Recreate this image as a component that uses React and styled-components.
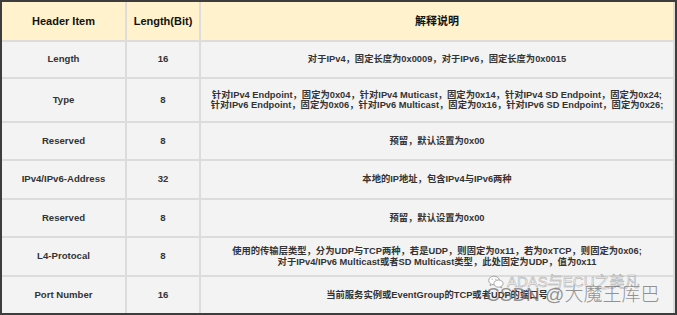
import styled, { createGlobalStyle } from "styled-components"

const GlobalStyle = createGlobalStyle`
    html, body {
        margin: 0;
        padding: 0;
        background: #ffffff;
    }
    body {
        font-family: "Liberation Sans", "Noto Sans CJK SC", sans-serif;
    }
`

const Frame = styled.div`
    position: relative;
    box-sizing: border-box;
    width: 677px;
    height: 315px;
    border: 2px solid #3d3d3d;
    background: #3d3d3d;
    overflow: hidden;
`

const Grid = styled.div`
    display: grid;
    grid-template-columns: 123px 72px 1fr;
    grid-template-rows: 38px 35px 42px 36px 37px 36px 37px 36px;
    gap: 2px;
    height: 100%;
    background: #dcdcdc;
    padding-right: 2px;
`

const Cell = styled.div`
    display: flex;
    align-items: center;
    justify-content: center;
    text-align: center;
    background: ${p => (p.$head ? "#fff2cc" : "#f3f3f3")};
    color: ${p => (p.$head ? "#111" : "#333")};
    font-size: ${p => (p.$head ? "11px" : p.$wide ? "9.3px" : "9.6px")};
    font-weight: 700;
    line-height: 10.5px;
    white-space: pre-line;
    font-family: "Liberation Sans", "Noto Sans CJK SC", sans-serif;
`

const Watermark = styled.div`
    position: absolute;
    left: 484px;
    top: 272px;
    pointer-events: none;
`

const Account = styled.div`
    display: flex;
    align-items: center;
    gap: 3px;
    margin-left: 2px;
    font-family: "Liberation Sans", "Noto Sans CJK SC", sans-serif;
    font-size: 15px;
    line-height: 16px;
    color: rgba(255, 255, 255, 0.7);
    -webkit-text-stroke: 0.5px #a5a5a5;
`

const Author = styled.div`
    margin-top: -5px;
    font-family: "Liberation Sans", "Noto Sans CJK SC", sans-serif;
    font-size: 19px;
    font-weight: 300;
    line-height: 20px;
    color: rgba(120, 120, 120, 0.8);
    white-space: nowrap;
`

const WeChat = () => (
    <svg width="16" height="14" viewBox="0 0 16 14" fill="none" stroke="#a5a5a5" strokeWidth="1">
        <ellipse cx="6" cy="5.5" rx="5.3" ry="4.3" fill="#fff" />
        <path d="M2.6 8.6 L2 10.6 L4.4 9.4" fill="#fff" />
        <ellipse cx="10.5" cy="8.6" rx="4.6" ry="3.6" fill="#fff" />
        <path d="M13.2 11.4 L13.8 13 L11.9 12" fill="#fff" />
        <circle cx="4.2" cy="4.2" r="0.6" fill="#a5a5a5" stroke="none" />
        <circle cx="7.8" cy="4.2" r="0.6" fill="#a5a5a5" stroke="none" />
    </svg>
)

const rows = [
    ["Length", "16", "对于IPv4，固定长度为0x0009，对于IPv6，固定长度为0x0015"],
    ["Type", "8", "针对IPv4 Endpoint，固定为0x04，针对IPv4 Muticast，固定为0x14，针对IPv4 SD Endpoint，固定为0x24;\n针对IPv6 Endpoint，固定为0x06，针对IPv6 Multicast，固定为0x16，针对IPv6 SD Endpoint，固定为0x26;"],
    ["Reserved", "8", "预留，默认设置为0x00"],
    ["IPv4/IPv6-Address", "32", "本地的IP地址，包含IPv4与IPv6两种"],
    ["Reserved", "8", "预留，默认设置为0x00"],
    ["L4-Protocal", "8", "使用的传输层类型，分为UDP与TCP两种，若是UDP，则固定为0x11，若为0xTCP，则固定为0x06;\n对于IPv4/IPv6 Multicast或者SD Multicast类型，此处固定为UDP，值为0x11"],
    ["Port Number", "16", "当前服务实例或EventGroup的TCP或者UDP的端口号"],
]

export default function App() {
    return (
        <>
            <GlobalStyle />
            <Frame>
                <Grid>
                    <Cell $head>Header Item</Cell>
                    <Cell $head>Length(Bit)</Cell>
                    <Cell $head>解释说明</Cell>
                    {rows.map((r, i) => [
                        <Cell key={i + "a"}>{r[0]}</Cell>,
                        <Cell key={i + "b"}>{r[1]}</Cell>,
                        <Cell key={i + "c"} $wide>{r[2]}</Cell>,
                    ])}
                </Grid>
                <Watermark>
                    <Account>
                        <WeChat />
                        ADAS与ECU之美凡
                    </Account>
                    <Author>CSDN @大魔王库巴</Author>
                </Watermark>
            </Frame>
        </>
    )
}
